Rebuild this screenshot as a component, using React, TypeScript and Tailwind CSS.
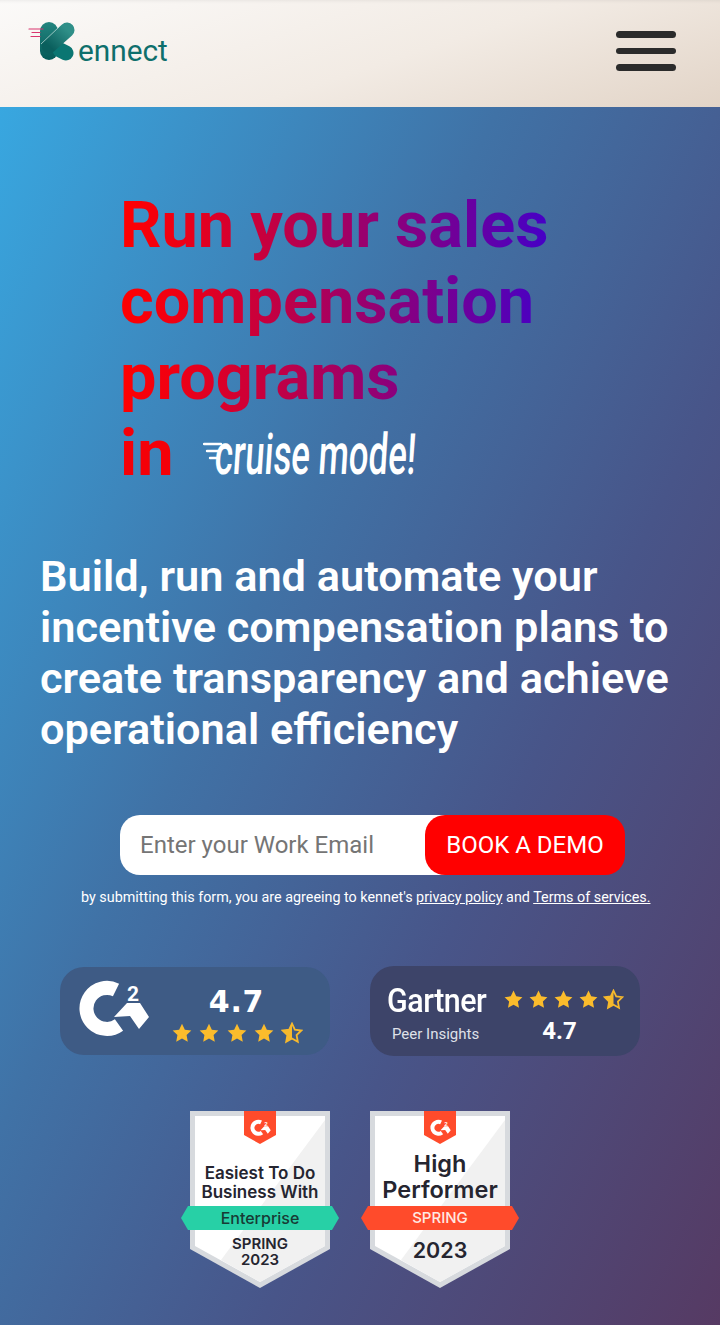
import React from "react";

function KennectLogo() {
  return (
    <svg width="50" height="42" viewBox="0 0 50 42" fill="none">
      <defs>
        <linearGradient id="kStem" x1="0" y1="0" x2="0" y2="1">
          <stop offset="0" stopColor="#23857f" />
          <stop offset="1" stopColor="#045a58" />
        </linearGradient>
        <linearGradient id="kArm" x1="0" y1="1" x2="1" y2="0">
          <stop offset="0" stopColor="#0a5f5d" />
          <stop offset="1" stopColor="#2f8f88" />
        </linearGradient>
      </defs>
      <rect x="12" y="2" width="18" height="38" rx="9" fill="url(#kStem)" />
      <path d="M32 30L38 33" stroke="#0a7672" strokeWidth="15" strokeLinecap="round" />
      <path d="M21 26L39 10" stroke="url(#kArm)" strokeWidth="15" strokeLinecap="round" />
      <path d="M13 24L31 7" stroke="#cfe6e2" strokeWidth="0.7" />
      <path d="M1 9h14M4 12.5h8M3 16.5h9" stroke="#d9356f" strokeWidth="1.2" strokeLinecap="round" />
    </svg>
  );
}

function Star({ half = false, size = 18 }: { half?: boolean; size?: number }) {
  const d = "M12 1.8l3.1 6.6 7.1.9-5.2 5 1.3 7.2L12 18l-6.3 3.5L7 14.3l-5.2-5 7.1-.9z";
  return (
    <svg width={size} height={size} viewBox="0 0 24 24">
      {half ? (
        <>
          <path d={d} fill="none" stroke="#f6b92d" strokeWidth="2" />
          <path d="M12 1.8V18l-6.3 3.5L7 14.3l-5.2-5 7.1-.9z" fill="#f6b92d" />
        </>
      ) : (
        <path d={d} fill="#fbbc2c" />
      )}
    </svg>
  );
}

function Stars({ size, gap }: { size: number; gap: string }) {
  return (
    <div className={`flex items-center ${gap}`}>
      <Star size={size} />
      <Star size={size} />
      <Star size={size} />
      <Star size={size} />
      <Star size={size} half />
    </div>
  );
}

function G2Mark({ size, color }: { size: number; color: string }) {
  return (
    <svg width={size} height={size} viewBox="0 0 72 60" fill="none">
      <path d="M38 9A20.5 20.5 0 1 0 41 44" stroke={color} strokeWidth="14" />
      <path d="M36 36L49 22H62L71 36L61 48L52 35Z" fill={color} />
      <text x="55" y="20" fontSize="21" fontWeight="700" fill={color} textAnchor="middle" fontFamily="Roboto, sans-serif">
        2
      </text>
    </svg>
  );
}

function Shield({
  top,
  ribbon,
  ribbonClass,
  bottom,
}: {
  top: React.ReactNode;
  ribbon: string;
  ribbonClass: string;
  bottom: React.ReactNode;
}) {
  return (
    <div className="relative w-[158px] h-[177px] font-['Inter',sans-serif] text-[#252530]">
      <svg className="absolute inset-0" width="158" height="177" viewBox="0 0 158 177">
        <path d="M9 0H149V138L79 177L9 138Z" fill="#d7dade" />
        <path d="M14 5H144V135L79 171L14 135Z" fill="#fff" />
        <path d="M144 9V135L79 171L40 149Z" fill="#f1f1f1" />
        <path d="M63 0H95V24L79 33L63 24Z" fill="#ff4b2b" />
      </svg>
      <div className="absolute left-[69px] top-[7px]">
        <G2Mark size={21} color="#fff" />
      </div>
      <div className="relative flex flex-col items-center h-full">
        <div className="h-[95px] flex flex-col justify-end items-center">{top}</div>
        <div className={`w-full h-[24px] flex items-center justify-center [clip-path:polygon(0_50%,7px_0,151px_0,100%_50%,151px_100%,7px_100%)] ${ribbonClass}`}>
          {ribbon}
        </div>
        {bottom}
      </div>
    </div>
  );
}

export default function App() {
  return (
    <div className="w-[720px] h-[1325px] overflow-hidden font-['Roboto',sans-serif]">
      <header className="h-[107px] flex items-start justify-between pl-[28px] pr-[44px] shadow-[inset_0_4px_4px_-4px_rgba(0,0,0,0.1)] bg-[linear-gradient(162deg,#fbfaf9_0%,#f2ebe4_55%,#e2d4c7_100%)]">
        <div className="flex items-end pt-[20px]">
          <KennectLogo />
          <span className="mb-[-6px] text-[29.8px] leading-[34px] text-[#0e6f6c]">ennect</span>
        </div>
        <button className="mt-[31px] w-[60px] flex flex-col gap-[10px]">
          <span className="h-[7px] rounded-full bg-[#2b2b2b]" />
          <span className="h-[6px] rounded-full bg-[#2b2b2b]" />
          <span className="h-[7px] rounded-full bg-[#2b2b2b]" />
        </button>
      </header>

      <main className="h-[1218px] bg-[linear-gradient(116deg,#38a7e0_0%,#4072a6_38%,#485589_65%,#563a63_100%)]">
        <div className="pl-[120px] pt-[80px]">
          <h1 className="w-[440px] text-[64.8px] leading-[76px] font-bold">
            <span className="block bg-[linear-gradient(90deg,#ff0000_0%,#f00012_12%,#4000cc_100%)] bg-clip-text text-transparent">
              Run your sales compensation programs
            </span>
            <span className="flex items-center">
              <span className="text-[#f40008]">in</span>
              <span className="ml-[30px] flex items-center">
                <svg width="20" height="34" viewBox="0 0 20 34" fill="none">
                  <path d="M1 8h17M4 15h12M7 22h8" stroke="#fff" strokeWidth="2.4" strokeLinecap="round" />
                </svg>
                <span className="inline-block origin-left scale-x-[0.61] -skew-x-6 translate-y-[2px] whitespace-nowrap text-[57px] font-medium text-white -ml-[8px]">
                  cruise mode!
                </span>
              </span>
            </span>
          </h1>
        </div>

        <h2 className="mt-[60px] pl-[40px] w-[700px] text-[43.3px] leading-[51px] font-semibold text-white">
          Build, run and automate your incentive compensation plans to create transparency and achieve operational efficiency
        </h2>

        <form className="mt-[60px] ml-[120px] w-[505px] h-[60px] flex">
          <input
            placeholder="Enter your Work Email"
            className="min-w-0 flex-1 -mr-[20px] pl-[20px] pr-[20px] bg-white rounded-l-[20px] text-[24px] outline-none placeholder:text-[#757575]"
          />
          <button type="button" className="relative w-[200px] rounded-[20px] bg-[#ff0000] text-[24px] text-white">
            BOOK A DEMO
          </button>
        </form>
        <p className="mt-[14px] pl-[81px] text-[14.35px] leading-[18px] whitespace-nowrap text-white">
          by submitting this form, you are agreeing to kennet's <a className="underline">privacy policy</a> and{" "}
          <a className="underline">Terms of services.</a>
        </p>

        <div className="mt-[59px] pl-[60px] flex items-center gap-[40px]">
          <div className="w-[270px] h-[88px] rounded-[24px] bg-[#3e5b85] flex items-center pl-[18px]">
            <G2Mark size={72} color="#fff" />
            <div className="ml-[20px] pt-[7px] flex flex-col items-center w-[133px]">
              <span className="text-[30px] leading-[34px] font-bold tracking-wide text-white font-['DejaVu_Sans',sans-serif]">4.7</span>
              <div className="mt-[3px]">
                <Stars size={22} gap="gap-[5.5px]" />
              </div>
            </div>
          </div>
          <div className="w-[270px] h-[90px] rounded-[24px] bg-[#3d4469] flex items-center pl-[17px]">
            <div className="w-[118px] pt-[2px] text-white">
              <div className="text-[33px] leading-[38px] font-medium tracking-[-0.5px] [transform:scaleX(0.92)] origin-left">Gartner</div>
              <div className="ml-[5px] mt-[5px] text-[15px] leading-[18px] text-[#dfe1e8]">Peer Insights</div>
            </div>
            <div className="flex flex-col items-center -ml-[2px] pt-[13px]">
              <Stars size={21} gap="gap-[4px]" />
              <span className="mt-[6px] mr-[8px] text-[24px] leading-[30px] font-bold text-white">4.7</span>
            </div>
          </div>
        </div>

        <div className="mt-[55px] ml-[181px] flex gap-[22px]">
          <Shield
            top={
              <div className="mb-[4px] text-center text-[17px] leading-[19px] font-semibold whitespace-nowrap">
                Easiest To Do
                <br />
                Business With
              </div>
            }
            ribbon="Enterprise"
            ribbonClass="bg-[#27d0a6] text-[#173b35] text-[16px] font-medium"
            bottom={
              <div className="mt-[6px] text-center text-[15px] leading-[16px] font-semibold">
                SPRING
                <br />
                2023
              </div>
            }
          />
          <Shield
            top={
              <div className="mb-[3px] text-center text-[23.5px] leading-[26px] font-semibold whitespace-nowrap">
                High
                <br />
                Performer
              </div>
            }
            ribbon="SPRING"
            ribbonClass="bg-[#ff4b2b] text-[#ffe9e3] text-[15px] font-medium"
            bottom={<div className="mt-[6px] text-[21.5px] leading-[28px] font-semibold">2023</div>}
          />
        </div>
      </main>
    </div>
  );
}
